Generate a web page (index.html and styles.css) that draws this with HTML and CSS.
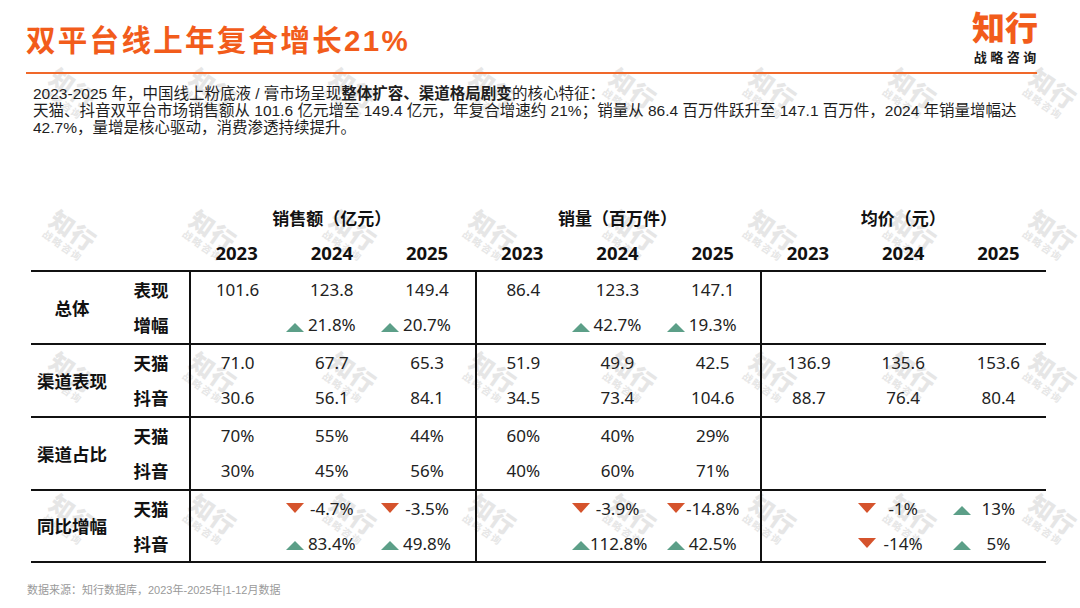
FILE: index.html
```html
<!DOCTYPE html>
<html lang="zh-CN">
<head>
<meta charset="utf-8">
<title>双平台线上年复合增长21%</title>
<link rel="stylesheet" href="styles.css">
</head>
<body>
<div class="page">
  <div class="watermarks" aria-hidden="true">
    <div class="wm"><span class="wm-main">知行</span><span class="wm-sub">战略咨询</span></div>
    <div class="wm"><span class="wm-main">知行</span><span class="wm-sub">战略咨询</span></div>
    <div class="wm"><span class="wm-main">知行</span><span class="wm-sub">战略咨询</span></div>
    <div class="wm"><span class="wm-main">知行</span><span class="wm-sub">战略咨询</span></div>
    <div class="wm"><span class="wm-main">知行</span><span class="wm-sub">战略咨询</span></div>
    <div class="wm"><span class="wm-main">知行</span><span class="wm-sub">战略咨询</span></div>
    <div class="wm"><span class="wm-main">知行</span><span class="wm-sub">战略咨询</span></div>
    <div class="wm"><span class="wm-main">知行</span><span class="wm-sub">战略咨询</span></div>
    <div class="wm"><span class="wm-main">知行</span><span class="wm-sub">战略咨询</span></div>
    <div class="wm"><span class="wm-main">知行</span><span class="wm-sub">战略咨询</span></div>
    <div class="wm"><span class="wm-main">知行</span><span class="wm-sub">战略咨询</span></div>
    <div class="wm"><span class="wm-main">知行</span><span class="wm-sub">战略咨询</span></div>
    <div class="wm"><span class="wm-main">知行</span><span class="wm-sub">战略咨询</span></div>
    <div class="wm"><span class="wm-main">知行</span><span class="wm-sub">战略咨询</span></div>
    <div class="wm"><span class="wm-main">知行</span><span class="wm-sub">战略咨询</span></div>
    <div class="wm"><span class="wm-main">知行</span><span class="wm-sub">战略咨询</span></div>
    <div class="wm"><span class="wm-main">知行</span><span class="wm-sub">战略咨询</span></div>
    <div class="wm"><span class="wm-main">知行</span><span class="wm-sub">战略咨询</span></div>
    <div class="wm"><span class="wm-main">知行</span><span class="wm-sub">战略咨询</span></div>
    <div class="wm"><span class="wm-main">知行</span><span class="wm-sub">战略咨询</span></div>
    <div class="wm"><span class="wm-main">知行</span><span class="wm-sub">战略咨询</span></div>
    <div class="wm"><span class="wm-main">知行</span><span class="wm-sub">战略咨询</span></div>
    <div class="wm"><span class="wm-main">知行</span><span class="wm-sub">战略咨询</span></div>
    <div class="wm"><span class="wm-main">知行</span><span class="wm-sub">战略咨询</span></div>
    <div class="wm"><span class="wm-main">知行</span><span class="wm-sub">战略咨询</span></div>
    <div class="wm"><span class="wm-main">知行</span><span class="wm-sub">战略咨询</span></div>
    <div class="wm"><span class="wm-main">知行</span><span class="wm-sub">战略咨询</span></div>
    <div class="wm"><span class="wm-main">知行</span><span class="wm-sub">战略咨询</span></div>
    <div class="wm"><span class="wm-main">知行</span><span class="wm-sub">战略咨询</span></div>
    <div class="wm"><span class="wm-main">知行</span><span class="wm-sub">战略咨询</span></div>
    <div class="wm"><span class="wm-main">知行</span><span class="wm-sub">战略咨询</span></div>
    <div class="wm"><span class="wm-main">知行</span><span class="wm-sub">战略咨询</span></div>
  </div>

  <div class="content">
    <header class="top">
      <h1 class="title">双平台线上年复合增长21%</h1>
      <div class="logo">
        <div class="logo-main">知行</div>
        <div class="logo-sub">战略咨询</div>
      </div>
    </header>
    <div class="rule"></div>

    <div class="intro">
      <p>2023-2025 年，中国线上粉底液 / 膏市场呈现<b>整体扩容、渠道格局剧变</b>的核心特征：</p>
      <p>天猫、抖音双平台市场销售额从 101.6 亿元增至 149.4 亿元，年复合增速约 21%；销量从 86.4 百万件跃升至 147.1 百万件，2024 年销量增幅达</p>
      <p>42.7%，量增是核心驱动，消费渗透持续提升。</p>
    </div>

    <table class="data">
      <colgroup>
        <col class="c-grp"><col class="c-sub">
        <col><col><col><col><col><col><col><col><col>
      </colgroup>
      <thead>
        <tr class="h1">
          <th colspan="2"></th>
          <th colspan="3">销售额（亿元）</th>
          <th colspan="3">销量（百万件）</th>
          <th colspan="3">均价（元）</th>
        </tr>
        <tr class="h2">
          <th colspan="2"></th>
          <th>2023</th><th>2024</th><th>2025</th>
          <th>2023</th><th>2024</th><th>2025</th>
          <th>2023</th><th>2024</th><th>2025</th>
        </tr>
      </thead>
      <tbody>
        <tr class="r1">
          <td class="grp" rowspan="2">总体</td>
          <td class="sub">表现</td>
          <td class="gs">101.6</td><td>123.8</td><td>149.4</td>
          <td class="gs">86.4</td><td>123.3</td><td>147.1</td>
          <td class="gs"></td><td></td><td></td>
        </tr>
        <tr class="r2">
          <td class="sub">增幅</td>
          <td class="gs"></td>
          <td><div class="chg"><i class="tri up"></i><span>21.8%</span></div></td>
          <td><div class="chg"><i class="tri up"></i><span>20.7%</span></div></td>
          <td class="gs"></td>
          <td><div class="chg"><i class="tri up"></i><span>42.7%</span></div></td>
          <td><div class="chg"><i class="tri up"></i><span>19.3%</span></div></td>
          <td class="gs"></td><td></td><td></td>
        </tr>

        <tr class="r1">
          <td class="grp" rowspan="2">渠道表现</td>
          <td class="sub">天猫</td>
          <td class="gs">71.0</td><td>67.7</td><td>65.3</td>
          <td class="gs">51.9</td><td>49.9</td><td>42.5</td>
          <td class="gs">136.9</td><td>135.6</td><td>153.6</td>
        </tr>
        <tr class="r2">
          <td class="sub">抖音</td>
          <td class="gs">30.6</td><td>56.1</td><td>84.1</td>
          <td class="gs">34.5</td><td>73.4</td><td>104.6</td>
          <td class="gs">88.7</td><td>76.4</td><td>80.4</td>
        </tr>

        <tr class="r1">
          <td class="grp" rowspan="2">渠道占比</td>
          <td class="sub">天猫</td>
          <td class="gs">70%</td><td>55%</td><td>44%</td>
          <td class="gs">60%</td><td>40%</td><td>29%</td>
          <td class="gs"></td><td></td><td></td>
        </tr>
        <tr class="r2">
          <td class="sub">抖音</td>
          <td class="gs">30%</td><td>45%</td><td>56%</td>
          <td class="gs">40%</td><td>60%</td><td>71%</td>
          <td class="gs"></td><td></td><td></td>
        </tr>

        <tr class="r1">
          <td class="grp last" rowspan="2">同比增幅</td>
          <td class="sub">天猫</td>
          <td class="gs"></td>
          <td><div class="chg"><i class="tri down"></i><span>-4.7%</span></div></td>
          <td><div class="chg"><i class="tri down"></i><span>-3.5%</span></div></td>
          <td class="gs"></td>
          <td><div class="chg"><i class="tri down"></i><span>-3.9%</span></div></td>
          <td><div class="chg"><i class="tri down"></i><span>-14.8%</span></div></td>
          <td class="gs"></td>
          <td><div class="chg"><i class="tri down"></i><span>-1%</span></div></td>
          <td><div class="chg"><i class="tri up"></i><span>13%</span></div></td>
        </tr>
        <tr class="r2 last">
          <td class="sub">抖音</td>
          <td class="gs"></td>
          <td><div class="chg"><i class="tri up"></i><span>83.4%</span></div></td>
          <td><div class="chg"><i class="tri up"></i><span>49.8%</span></div></td>
          <td class="gs"></td>
          <td><div class="chg"><i class="tri up"></i><span>112.8%</span></div></td>
          <td><div class="chg"><i class="tri up"></i><span>42.5%</span></div></td>
          <td class="gs"></td>
          <td><div class="chg"><i class="tri down"></i><span>-14%</span></div></td>
          <td><div class="chg"><i class="tri up"></i><span>5%</span></div></td>
        </tr>
      </tbody>
    </table>

    <p class="source">数据来源：知行数据库，2023年-2025年|1-12月数据</p>
  </div>
</div>
</body>
</html>
```

FILE: styles.css
```css
* {
  box-sizing: border-box;
  margin: 0;
  padding: 0;
}

html, body {
  width: 1080px;
  height: 608px;
  overflow: hidden;
  background: #ffffff;
}

body {
  font-family: "Liberation Sans", "Noto Sans CJK SC", sans-serif;
  color: #1c1c1c;
}

.page {
  position: relative;
  width: 1080px;
  height: 608px;
  overflow: hidden;
}

/* watermark layer */
.watermarks {
  position: absolute;
  left: 0;
  top: 22px;
  display: grid;
  grid-template-columns: repeat(8, 140px);
  grid-auto-rows: 142px;
  z-index: 0;
  pointer-events: none;
}

.wm {
  display: flex;
  flex-direction: column;
  align-items: center;
  justify-content: center;
  transform: rotate(35deg);
  color: #e6e6e6;
  font-family: "Noto Sans CJK SC", sans-serif;
  font-weight: 900;
}

.wm-main {
  font-size: 24px;
  line-height: 26px;
  letter-spacing: 1px;
}

.wm-sub {
  font-size: 10px;
  line-height: 12px;
  letter-spacing: 1.5px;
  font-weight: 700;
}

.content {
  position: relative;
  z-index: 1;
}

/* header */
.top {
  display: flex;
  justify-content: space-between;
  align-items: flex-start;
  height: 72px;
  padding: 0 42px 0 26px;
}

.title {
  margin-top: 24px;
  font-size: 29.5px;
  line-height: 34px;
  font-weight: 700;
  letter-spacing: 2.3px;
  color: #f25c1b;
}

.logo {
  padding-top: 12px;
  display: flex;
  flex-direction: column;
  align-items: center;
}

.logo-main {
  font-family: "Liberation Sans", "Noto Sans CJK SC", sans-serif;
  font-weight: 900;
  font-size: 33px;
  line-height: 34px;
  color: #f25c1b;
}

.logo-sub {
  font-family: "Liberation Sans", "Noto Sans CJK SC", sans-serif;
  font-weight: 700;
  font-size: 13px;
  line-height: 14px;
  letter-spacing: 3.5px;
  margin-top: 5px;
  margin-right: -3.5px;
  color: #1a1a1a;
}

.rule {
  height: 2px;
  background: #f0682a;
  margin: 0 43px 0 26px;
}

/* intro */
.intro {
  margin-top: 11px;
  padding-left: 33px;
  font-size: 15.5px;
  line-height: 17px;
  color: #1e1e1e;
}

.intro p {
  white-space: nowrap;
}

.intro b {
  font-weight: 700;
}

/* table */
.data {
  margin: 64px 0 0 31px;
  width: 1015px;
  border-collapse: separate;
  border-spacing: 0;
  table-layout: fixed;
  font-family: "Noto Sans", "Noto Sans CJK SC", sans-serif;
  color: #222;
}

.c-grp { width: 82px; }
.c-sub { width: 76px; }

.data th {
  font-weight: 700;
  text-align: center;
  color: #111;
  padding: 0;
}

.data tr.h1 { height: 35px; }
.data tr.h1 th {
  font-family: "Noto Sans CJK SC", sans-serif;
  font-size: 17px;
  vertical-align: middle;
}

.data tr.h2 { height: 35px; }
.data tr.h2 th {
  font-size: 18.5px;
  vertical-align: middle;
}

.data td {
  padding: 0;
  text-align: center;
  vertical-align: middle;
  font-size: 17px;
  line-height: 20px;
}

.data tr.r1 { height: 37px; }
.data tr.r2 { height: 36px; }
.data tr.r2.last { height: 37px; }

.data tr.r1 td {
  border-top: 2px solid #111;
}

.data tr.last td,
.data td.grp.last {
  border-bottom: 2px solid #111;
}

.data td.gs {
  border-left: 2px solid #111;
}

.data td.grp,
.data td.sub {
  font-family: "Noto Sans CJK SC", sans-serif;
  font-weight: 700;
  font-size: 17.5px;
  color: #111;
}

.chg {
  display: grid;
  grid-template-columns: 20px 1fr 20px;
  align-items: center;
}

.chg span {
  grid-column: 2;
  grid-row: 1;
  text-align: center;
}

.tri {
  grid-column: 1;
  grid-row: 1;
  justify-self: start;
  margin-left: 2px;
  width: 0;
  height: 0;
  border-left: 9px solid transparent;
  border-right: 9px solid transparent;
}

.tri.up {
  border-bottom: 9px solid #5c9f88;
  transform: translateY(2px);
}

.tri.down {
  border-top: 10px solid #d5532c;
  transform: translateY(-1px);
}

/* footer */
.source {
  margin-top: 20px;
  padding-left: 27px;
  font-size: 11px;
  line-height: 14px;
  color: #9a9a9a;
}
```
